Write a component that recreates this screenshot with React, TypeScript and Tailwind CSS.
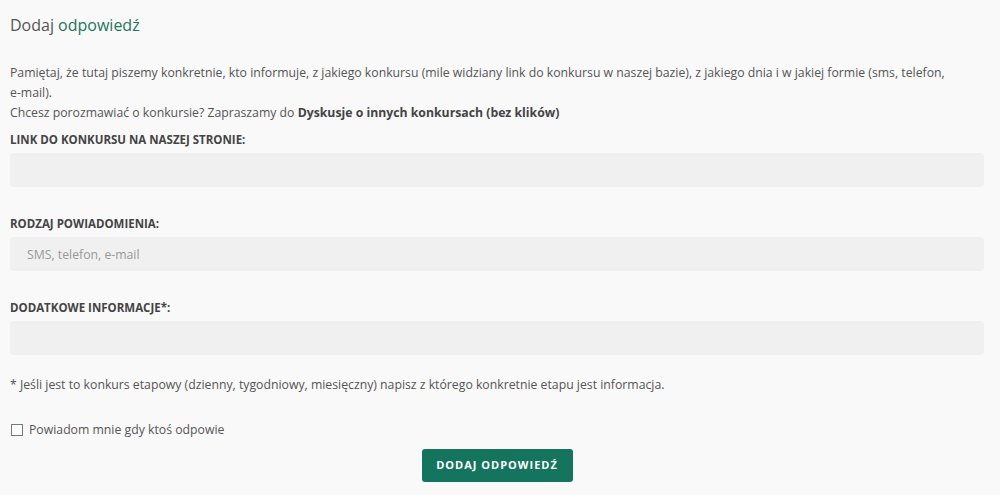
import { useState } from "react";

const fields = [
  { label: "Link do konkursu na naszej stronie:", placeholder: "" },
  { label: "Rodzaj powiadomienia:", placeholder: "SMS, telefon, e-mail" },
  { label: "Dodatkowe informacje*:", placeholder: "" },
];

export default function App() {
  const [notify, setNotify] = useState(false);

  return (
    <div className="min-h-[495px] bg-[#f9f9f9] pl-[10px] pr-[16px] pt-[14px] font-['Open_Sans',sans-serif] text-[#555]">
      <h2 className="text-[16px] leading-[22px] font-normal">
        Dodaj <span className="text-[#1d765c]">odpowiedź</span>
      </h2>

      <div className="mt-[27px] text-[12.25px] leading-[20px]">
        <p>
          Pamiętaj, że tutaj piszemy konkretnie, kto informuje, z jakiego konkursu (mile widziany link do
          konkursu w naszej bazie), z jakiego dnia i w jakiej formie (sms, telefon,{" "}
          <span className="whitespace-nowrap">e-mail).</span>
        </p>
        <p>
          Chcesz porozmawiać o konkursie? Zapraszamy do{" "}
          <a href="#" className="font-bold text-[#444]">
            Dyskusje o innych konkursach (bez klików)
          </a>
        </p>
      </div>

      <form className="mt-[9px]" onSubmit={(e) => e.preventDefault()}>
        {fields.map((f, i) => (
          <div key={f.label} className={i === 0 ? "" : "mt-[29px]"}>
            <label className="block text-[11.5px] leading-[16px] font-bold uppercase text-[#444]">
              {f.label}
            </label>
            <input
              type="text"
              placeholder={f.placeholder}
              className="mt-[5px] block h-[34px] w-full rounded-[4px] bg-[#f0f0f0] px-[17px] text-[12.25px] text-[#555] outline-none placeholder:text-[#999]"
            />
          </div>
        ))}

        <p className="mt-[20px] text-[12.25px] leading-[20px]">
          * Jeśli jest to konkurs etapowy (dzienny, tygodniowy, miesięczny) napisz z którego konkretnie etapu
          jest informacja.
        </p>

        <label className="mt-[25px] flex items-center gap-[6px] text-[12.25px] leading-[20px]">
          <input
            type="checkbox"
            checked={notify}
            onChange={(e) => setNotify(e.target.checked)}
            className="ml-px h-[12px] w-[12px] appearance-none border border-[#777] bg-white"
          />
          Powiadom mnie gdy ktoś odpowie
        </label>

        <div className="mt-[9px] flex justify-center">
          <button
            type="submit"
            className="h-[33px] w-[151px] rounded-[3px] bg-[#15745d] text-[11px] font-bold uppercase tracking-[1px] text-white"
          >
            Dodaj odpowiedź
          </button>
        </div>
      </form>
    </div>
  );
}
